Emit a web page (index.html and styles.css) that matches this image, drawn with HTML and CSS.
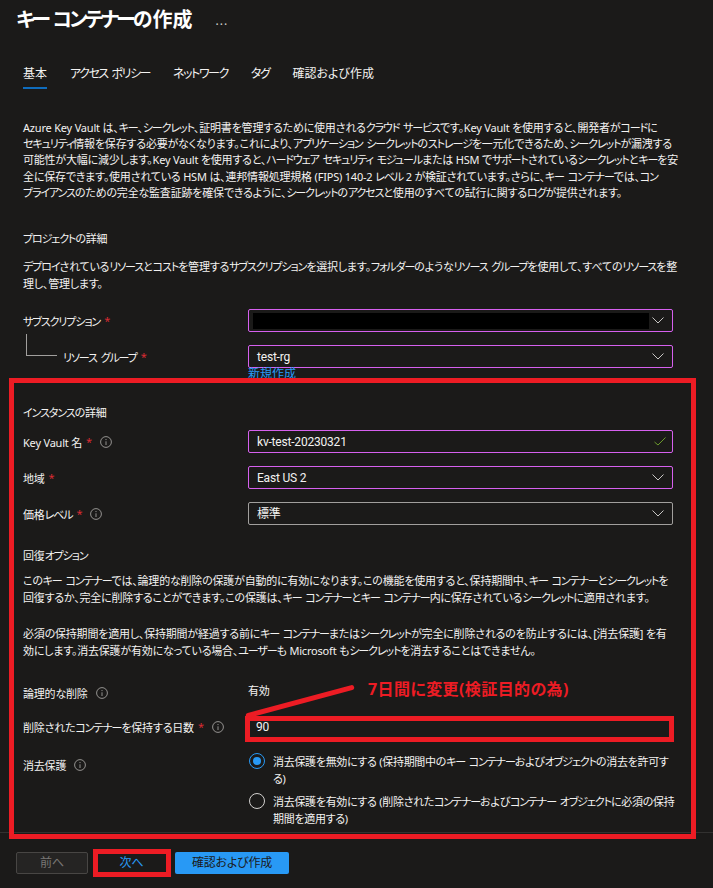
FILE: index.html
```html
<!DOCTYPE html>
<html lang="ja">

<head>
    <meta charset="UTF-8">
    <meta name="viewport" content="width=device-width, initial-scale=1.0">
    <title>キー コンテナーの作成</title>
    <link rel="stylesheet" href="styles.css">
</head>

<body>
    <svg class="icon-defs" width="0" height="0">
        <symbol id="chevron" viewBox="0 0 12 7">
            <path d="M0.5 0.5 L6 6 L11.5 0.5" fill="none" stroke="#c8c6c4" stroke-width="1"></path>
        </symbol>
        <symbol id="check" viewBox="0 0 12 9">
            <path d="M0.5 5 L4 8 L11.5 0.5" fill="none" stroke="#6b9a2c" stroke-width="1"></path>
        </symbol>
        <symbol id="info" viewBox="0 0 12 12">
            <circle cx="6" cy="6" r="5.4" fill="none" stroke="#a19f9d" stroke-width="0.9"></circle>
            <path d="M6 5.3 V9 M6 3 V4.1" fill="none" stroke="#a19f9d" stroke-width="0.9"></path>
        </symbol>
    </svg>

    <div class="page">
        <div class="title-bar">
            <h1 class="title"><span class="ka">キー コンテナー</span>の作成</h1>
            <span class="title-more">...</span>
        </div>

        <div class="main">
            <div class="tabs">
                <div class="tab active">基本</div>
                <div class="tab"><span class="ka">アクセス ポリシー</span></div>
                <div class="tab"><span class="ka">ネットワーク</span></div>
                <div class="tab"><span class="ka">タグ</span></div>
                <div class="tab">確認および作成</div>
            </div>

            <p class="intro">Azure Key Vault は、<span class="ka">キー</span>、<span class="ka">シークレット</span>、証明書を管理するために使用される<span class="ka">クラウド サービス</span>です。Key Vault を使用すると、開発者が<span class="ka">コード</span>に<br><span class="ka">セキュリティ</span>情報を保存する必要がなくなります。これにより、<span class="ka">アプリケーション シークレット</span>の<span class="ka">ストレージ</span>を一元化できるため、<span class="ka">シークレット</span>が漏洩する<br>可能性が大幅に減少します。Key Vault を使用すると、<span class="ka">ハードウェア セキュリティ モジュール</span>または HSM で<span class="ka">サポート</span>されている<span class="ka">シークレット</span>と<span class="ka">キー</span>を安<br>全に保存できます。使用されている HSM は、連邦情報処理規格 (FIPS) 140-2 <span class="ka">レベル</span> 2 が検証されています。さらに、<span class="ka">キー コンテナー</span>では、<span class="ka">コン</span><br><span class="ka">プライアンス</span>のための完全な監査証跡を確保できるように、<span class="ka">シークレット</span>の<span class="ka">アクセス</span>と使用のすべての試行に関する<span class="ka">ログ</span>が提供されます。</p>

            <h2 class="section-title project-title"><span class="ka">プロジェクト</span>の詳細</h2>
            <p class="section-text"><span class="ka">デプロイ</span>されている<span class="ka">リソース</span>と<span class="ka">コスト</span>を管理する<span class="ka">サブスクリプション</span>を選択します。<span class="ka">フォルダー</span>のような<span class="ka">リソース グループ</span>を使用して、すべての<span class="ka">リソース</span>を整<br>理し、管理します。</p>

            <div class="form-group project-form">
                <div class="form-row">
                    <div class="form-label"><span class="ka">サブスクリプション</span><span class="req">*</span></div>
                    <div class="field edited">
                        <span class="redacted"></span>
                        <svg class="chevron"><use href="#chevron"></use></svg>
                    </div>
                </div>
                <div class="form-row">
                    <div class="form-label child"><span class="ka">リソース グループ</span><span class="req">*</span></div>
                    <div class="field-wrap">
                        <div class="field edited">
                            <span class="field-value">test-rg</span>
                            <svg class="chevron"><use href="#chevron"></use></svg>
                        </div>
                        <a class="new-link">新規作成</a>
                    </div>
                </div>
            </div>

            <h2 class="section-title instance-title"><span class="ka">インスタンス</span>の詳細</h2>
            <div class="form-group">
                <div class="form-row">
                    <div class="form-label">Key Vault 名<span class="req">*</span><svg class="info"><use href="#info"></use></svg></div>
                    <div class="field edited">
                        <span class="field-value">kv-test-20230321</span>
                        <svg class="check"><use href="#check"></use></svg>
                    </div>
                </div>
                <div class="form-row">
                    <div class="form-label">地域<span class="req">*</span></div>
                    <div class="field edited">
                        <span class="field-value">East US 2</span>
                        <svg class="chevron"><use href="#chevron"></use></svg>
                    </div>
                </div>
                <div class="form-row">
                    <div class="form-label">価格<span class="ka">レベル</span><span class="req">*</span><svg class="info"><use href="#info"></use></svg></div>
                    <div class="field">
                        <span class="field-value">標準</span>
                        <svg class="chevron"><use href="#chevron"></use></svg>
                    </div>
                </div>
            </div>

            <h2 class="section-title recovery-title">回復<span class="ka">オプション</span></h2>
            <p class="section-text recovery-text">この<span class="ka">キー コンテナー</span>では、論理的な削除の保護が自動的に有効になります。この機能を使用すると、保持期間中、<span class="ka">キー コンテナー</span>と<span class="ka">シークレット</span>を<br>回復するか、完全に削除することができます。この保護は、<span class="ka">キー コンテナー</span>と<span class="ka">キー コンテナー</span>内に保存されている<span class="ka">シークレット</span>に適用されます。</p>
            <p class="section-text second-text">必須の保持期間を適用し、保持期間が経過する前に<span class="ka">キー コンテナー</span>または<span class="ka">シークレット</span>が完全に削除されるのを防止するには、[消去保護] を有<br>効にします。消去保護が有効になっている場合、<span class="ka">ユーザー</span>も Microsoft も<span class="ka">シークレット</span>を消去することはできません。</p>

            <div class="form-row soft-row">
                <div class="form-label">論理的な削除<svg class="info"><use href="#info"></use></svg></div>
                <div class="plain-value">有効</div>
            </div>
            <div class="form-row days-row">
                <div class="form-label">削除された<span class="ka">コンテナー</span>を保持する日数<span class="req">*</span><svg class="info"><use href="#info"></use></svg></div>
                <div class="field bare">
                    <span class="field-value">90</span>
                </div>
            </div>
            <div class="form-row purge-row">
                <div class="form-label">消去保護<svg class="info"><use href="#info"></use></svg></div>
                <div class="radios">
                    <div class="radio-item">
                        <span class="radio checked"></span>
                        <span class="radio-text">消去保護を無効にする (保持期間中の<span class="ka">キー コンテナー</span>および<span class="ka">オブジェクト</span>の消去を許可す<br>る)</span>
                    </div>
                    <div class="radio-item">
                        <span class="radio"></span>
                        <span class="radio-text">消去保護を有効にする (削除された<span class="ka">コンテナー</span>および<span class="ka">コンテナー オブジェクト</span>に必須の保持<br>期間を適用する)</span>
                    </div>
                </div>
            </div>
        </div>

        <div class="footer">
            <button class="btn btn-disabled" type="button">前へ</button>
            <button class="btn btn-next" type="button">次へ</button>
            <button class="btn btn-primary" type="button">確認および作成</button>
        </div>

        <!-- red annotations on top of the screenshot -->
        <div class="mark mark-instance"></div>
        <div class="mark mark-days"></div>
        <div class="mark mark-next"></div>
        <div class="mark-line"></div>
        <div class="mark-text">7日間に変更(検証目的の為)</div>
    </div>
</body>

</html>
```

FILE: styles.css
```css
* {
    box-sizing: border-box;
}

body {
    margin: 0;
    background-color: #1b1a19;
    color: #f3f2f1;
    font-family: "Noto Sans", "Noto Sans CJK JP", sans-serif;
    font-size: 11px;
    letter-spacing: -0.2px;
    font-feature-settings: "palt";
}

.icon-defs {
    display: block;
}

/* katakana runs are narrower in the original UI font */
.ka {
    letter-spacing: -0.1em;
    word-spacing: 2px;
}

.page {
    position: relative;
    width: 713px;
    height: 888px;
    overflow: hidden;
}

.title-bar {
    display: flex;
    align-items: center;
    height: 40px;
    padding-left: 16px;
}

.title {
    margin: 0;
    font-size: 20px;
    font-weight: 600;
    line-height: 28px;
    letter-spacing: 0;
    color: #ffffff;
}

.title .ka {
    letter-spacing: -0.14em;
}

.title-more {
    margin-left: 23px;
    font-size: 12px;
    letter-spacing: 1px;
    color: #d2d0ce;
}

.main {
    padding: 21px 39px 0 23px;
}

.tabs {
    display: flex;
    gap: 23px;
    height: 28px;
}

.tab {
    height: 28px;
    font-size: 12px;
    line-height: 26px;
    letter-spacing: 0;
    color: #f3f2f1;
}

.tab .ka {
    letter-spacing: -0.12em;
}

.tab.active {
    border-bottom: 2px solid #0f6cbd;
}

.intro {
    margin: 31px 0 0;
    line-height: 16.2px;
    white-space: nowrap;
}

.section-title {
    margin: 0;
    font-size: 11px;
    font-weight: 400;
    line-height: 16px;
}

.project-title {
    margin-top: 30px;
}

.section-text {
    margin: 12px 0 0;
    line-height: 16.5px;
    white-space: nowrap;
}

.recovery-text {
    margin-top: 9px;
}

.second-text {
    margin-top: 20px;
}

.form-group {
    display: flex;
    flex-direction: column;
    gap: 13px;
}

.project-form {
    margin-top: 17px;
}

.form-row {
    display: grid;
    grid-template-columns: 225px 425px;
    align-items: center;
}

.form-label {
    display: flex;
    align-items: center;
    height: 22px;
    white-space: pre;
}

.form-label.child {
    position: relative;
    padding-left: 40px;
}

/* connector from the subscription row */
.form-label.child::before {
    content: "";
    position: absolute;
    left: 3px;
    top: -12px;
    width: 30px;
    height: 21px;
    border-left: 1px solid #a19f9d;
    border-bottom: 1px solid #a19f9d;
}

.req {
    margin-left: 4px;
    color: #d92b33;
}

.info {
    width: 12px;
    height: 12px;
    margin-left: 8px;
}

.field-wrap {
    position: relative;
}

.field {
    position: relative;
    display: flex;
    align-items: center;
    height: 23px;
    padding-left: 8px;
    border: 1px solid #a19f9d;
    border-radius: 2px;
    font-family: Roboto, "Noto Sans CJK JP", sans-serif;
    font-size: 12px;
}

.field.edited {
    border-color: #d660ee;
}

.field.bare {
    border: 0;
}

.field-value {
    line-height: 20px;
}

.redacted {
    position: absolute;
    left: 4px;
    top: 3px;
    width: 396px;
    height: 16px;
    background-color: #000000;
}

.chevron {
    position: absolute;
    right: 8px;
    top: 7px;
    width: 12px;
    height: 7px;
}

.check {
    position: absolute;
    right: 6px;
    top: 6px;
    width: 12px;
    height: 9px;
}

.new-link {
    position: absolute;
    left: 0;
    top: 21px;
    font-size: 12px;
    line-height: 16px;
    letter-spacing: 0;
    color: #2899f5;
}

.form-group + .instance-title {
    margin-top: 37px;
}

.instance-title + .form-group {
    margin-top: 9px;
}

.recovery-title {
    margin-top: 23px;
}

.soft-row {
    margin-top: 23px;
}

.plain-value {
    margin-bottom: 4px;
    line-height: 16px;
}

.days-row {
    margin-top: 11px;
}

.purge-row {
    margin-top: 16px;
    align-items: start;
}

.radios {
    display: flex;
    flex-direction: column;
    gap: 6px;
    margin-top: -1px;
}

.radio-item {
    display: flex;
    gap: 8px;
    line-height: 17px;
}

.radio {
    flex: none;
    position: relative;
    width: 16px;
    height: 16px;
    margin: 0 0 0 1px;
    border: 1px solid #d2d0ce;
    border-radius: 50%;
}

.radio.checked {
    border-color: #2899f5;
}

.radio.checked::after {
    content: "";
    position: absolute;
    left: 3px;
    top: 3px;
    width: 8px;
    height: 8px;
    border-radius: 50%;
    background-color: #2899f5;
}

.radio-text {
    white-space: nowrap;
    letter-spacing: -0.3px;
}

.footer {
    position: absolute;
    left: 0;
    right: 0;
    top: 832px;
    display: flex;
    gap: 10px;
    height: 56px;
    padding: 19px 0 0 16px;
    border-top: 1px solid #323130;
}

.btn {
    height: 22px;
    padding: 0;
    border: 1px solid transparent;
    border-radius: 2px;
    background: none;
    font-family: inherit;
    font-size: 12px;
    font-feature-settings: inherit;
    line-height: 18px;
    letter-spacing: -0.2px;
}

.btn-disabled {
    width: 72px;
    border-color: #484644;
    background-color: #252423;
    color: #797775;
}

.btn-next {
    width: 67px;
    color: #2899f5;
}

.btn-primary {
    width: 114px;
    background-color: #2899f5;
    color: #1b1a19;
}

.mark {
    position: absolute;
    border: 5px solid #ed1c24;
}

.mark-instance {
    left: 9px;
    top: 378px;
    width: 687px;
    height: 461px;
}

.mark-days {
    left: 245px;
    top: 716px;
    width: 429px;
    height: 26px;
}

.mark-next {
    left: 93px;
    top: 849px;
    width: 78px;
    height: 28px;
}

.mark-line {
    position: absolute;
    left: 244px;
    top: 699px;
    width: 112px;
    height: 5px;
    border-radius: 3px;
    background-color: #ed1c24;
    transform: rotate(-15deg);
}

.mark-text {
    position: absolute;
    left: 368px;
    top: 678px;
    font-size: 16px;
    font-weight: 700;
    line-height: 22px;
    letter-spacing: 0.4px;
    color: #ed1c24;
}
```
